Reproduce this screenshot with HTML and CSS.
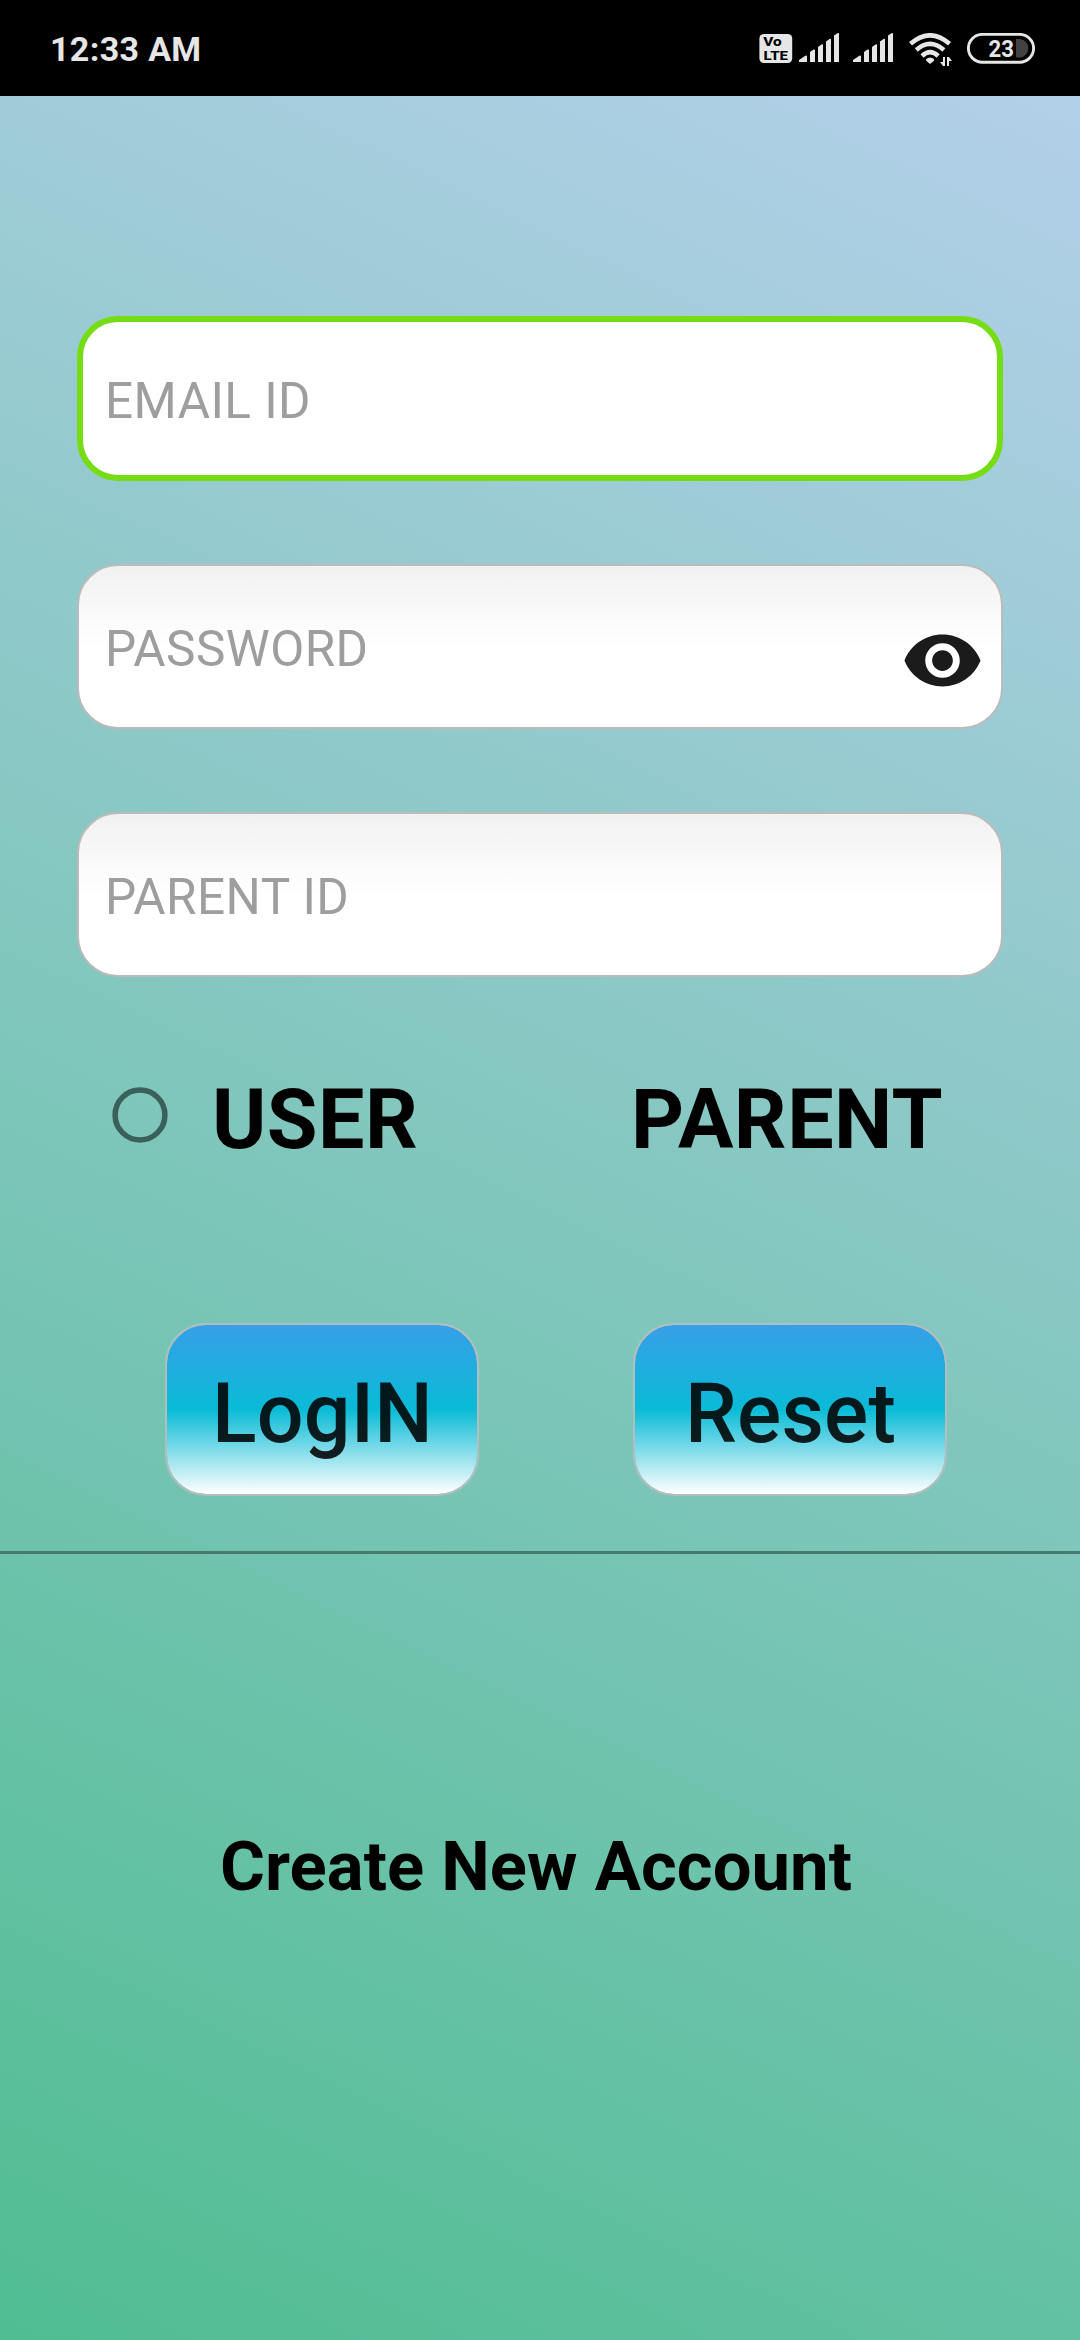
FILE: index.html
```html
<!DOCTYPE html>
<html lang="en">
<head>
<meta charset="utf-8">
<title>Login</title>
<link rel="stylesheet" href="styles.css">
</head>
<body>
<header class="status">
  <span class="time">12:33 AM</span>
  <div class="status-icons">
    <svg class="volte" width="34" height="32" viewBox="0 0 34 32">
      <rect x="0.4" y="1" width="32.8" height="29" rx="4.5" fill="#e6e6e6"/>
      <text x="4.2" y="12.6" font-size="12" textLength="18.500" lengthAdjust="spacingAndGlyphs">Vo</text>
      <text x="4.6" y="27" font-size="13" textLength="24.500" lengthAdjust="spacingAndGlyphs">LTE</text>
    </svg>
    <svg class="signal" width="40" height="32" viewBox="0 0 40 32">
      <path d="M0 29v-2l6-4q2-1 2 .5V29zM11 29V19l3.500-2.400q1.500-.6 1.500.5V29zM19 29V14l3.500-2.500q1.500-.6 1.500.5V29zM27 29V8.500l3.500-2.500q1.500-.6 1.500.5V29zM35 29V2.500l3.500-2.300q1.500-.6 1.500.5V29z"/>
    </svg>
    <svg class="signal second" width="40" height="32" viewBox="0 0 40 32">
      <path d="M0 29v-2l6-4q2-1 2 .5V29zM11 29V19l3.500-2.400q1.500-.6 1.500.5V29zM19 29V14l3.500-2.500q1.500-.6 1.500.5V29zM27 29V8.500l3.500-2.500q1.500-.6 1.500.5V29zM35 29V2.500l3.500-2.300q1.500-.6 1.500.5V29z"/>
    </svg>
    <svg class="wifi" width="44" height="34" viewBox="0 0 44 34">
      <g fill="none" stroke="#e6e6e6" stroke-width="4.500">
        <path d="M1.500 10.800Q21 -6.200 40.600 10.800"/>
        <path d="M7.300 17Q21 4.800 34.900 17"/>
        <path d="M13 23Q21 15.400 29.200 23"/>
      </g>
      <path d="M17.200 26q4-3.200 7.800 0v1.800L21 31l-3.800-3.200z"/>
      <path d="M34 24h2v9h-2l-3-4h3zM38 33v-9h2l3 4h-3v5z"/>
    </svg>
    <svg class="battery" width="68" height="32" viewBox="0 0 68 32">
      <rect x="1.400" y="1.400" width="65.200" height="27.800" rx="13.900" fill="none" stroke="#e6e6e6" stroke-width="2.900"/>
      <path d="M49 6h4a9.300 9.300 0 0 1 0 18.500h-4z" fill="#424242"/>
      <text class="level" x="21.600" y="24" font-size="24.500" textLength="25.500" lengthAdjust="spacingAndGlyphs">23</text>
    </svg>
  </div>
</header>
<main class="screen">
  <form class="fields">
    <div class="field focused"><span>EMAIL ID</span></div>
    <div class="field"><span>PASSWORD</span>
      <svg class="eye" viewBox="0 0 24 24"><path d="M12 4.500C7 4.500 2.730 7.610 1 12c1.730 4.390 6 7.500 11 7.500s9.270-3.110 11-7.500c-1.730-4.390-6-7.500-11-7.500zM12 17c-2.760 0-5-2.240-5-5s2.240-5 5-5 5 2.240 5 5-2.240 5-5 5zm0-8c-1.660 0-3 1.340-3 3s1.340 3 3 3 3-1.340 3-3-1.340-3-3-3z"/></svg>
    </div>
    <div class="field"><span>PARENT ID</span></div>
  </form>
  <div class="roles">
    <svg class="radio" viewBox="0 0 56 56"><circle cx="28" cy="28" r="24.900"/></svg>
    <span class="role user">USER</span>
    <span class="role">PARENT</span>
  </div>
  <div class="actions">
    <div class="button">LogIN</div>
    <div class="button reset">Reset</div>
  </div>
  <div class="divider"></div>
  <div class="create">Create New Account</div>
</main>
</body>
</html>
```

FILE: styles.css
```css
* { box-sizing: border-box; }

body {
  margin: 0;
  width: 1080px;
  height: 2340px;
  display: flex;
  flex-direction: column;
  font-family: Roboto, "Liberation Sans", sans-serif;
  overflow: hidden;
}

.status {
  height: 96px;
  background: #000;
  display: flex;
  justify-content: space-between;
  padding: 33px 45px 0 50px;
  color: #e6e6e6;
}

.time {
  font-size: 34px;
  font-weight: 700;
  line-height: 32px;
  letter-spacing: 0.350px;
  white-space: nowrap;
}

.status-icons {
  display: flex;
  align-items: flex-start;
}

.status-icons svg { fill: #e6e6e6; display: block; }

.volte text {
  fill: #000;
  font-weight: 800;
}

.signal { margin-left: 6px; }
.signal.second { margin-left: 14px; }
.wifi { margin-left: 16px; }
.battery { margin-left: 14px; }
.level { font-weight: 700; }

.screen {
  height: 2244px;
  background: linear-gradient(25.700deg, #50bd92, #b3d0e9);
  display: flex;
  flex-direction: column;
}

.fields {
  padding: 220px 77px 0;
  display: flex;
  flex-direction: column;
  gap: 83px;
}

.field {
  height: 165px;
  border: 2px solid #bbb;
  border-radius: 41px;
  background: linear-gradient(#f1f1f1, #fff 50%);
  display: flex;
  align-items: center;
  justify-content: space-between;
  padding: 5px 17px 0 26px;
  font-size: 49.500px;
  letter-spacing: 0.450px;
  line-height: 58px;
  color: #9e9e9e;
}

.field.focused {
  border: 6px solid #76dc13;
  background: #fff;
  padding-left: 22px;
}

.eye {
  width: 83px;
  height: 83px;
  margin-top: 23px;
  fill: #1b1b1b;
}

.roles {
  margin-top: 94px;
  height: 98px;
  padding-left: 112px;
  display: flex;
  align-items: center;
}

.radio {
  width: 56px;
  height: 56px;
  margin-bottom: 10px;
  fill: none;
  stroke: #3a6059;
  stroke-width: 5.500px;
}

.role {
  font-size: 82.500px;
  font-weight: 700;
  letter-spacing: 0.450px;
  line-height: 98px;
  color: #000;
}

.role.user {
  width: 419px;
  margin-left: 44px;
}

.actions {
  margin-top: 154px;
  padding-left: 165px;
  display: flex;
  gap: 154px;
}

.button {
  width: 314px;
  height: 173px;
  border: 2px solid #b2bdbf;
  border-radius: 41px;
  background: linear-gradient(#379fe8, #0abbd6 50%, #fff) padding-box;
  display: flex;
  align-items: center;
  justify-content: center;
  padding-top: 9px;
  padding-left: 1px;
  font-size: 82.500px;
  font-weight: 500;
  letter-spacing: 0.200px;
  line-height: 98px;
  color: rgba(0, 0, 0, 0.87);
}

.divider {
  margin-top: 55px;
  height: 3px;
  background: #467a6d;
}

.create {
  margin-top: 273px;
  padding-left: 220px;
  font-size: 68.750px;
  font-weight: 700;
  letter-spacing: 0.050px;
  line-height: 80px;
  color: #000;
  white-space: nowrap;
}
```
